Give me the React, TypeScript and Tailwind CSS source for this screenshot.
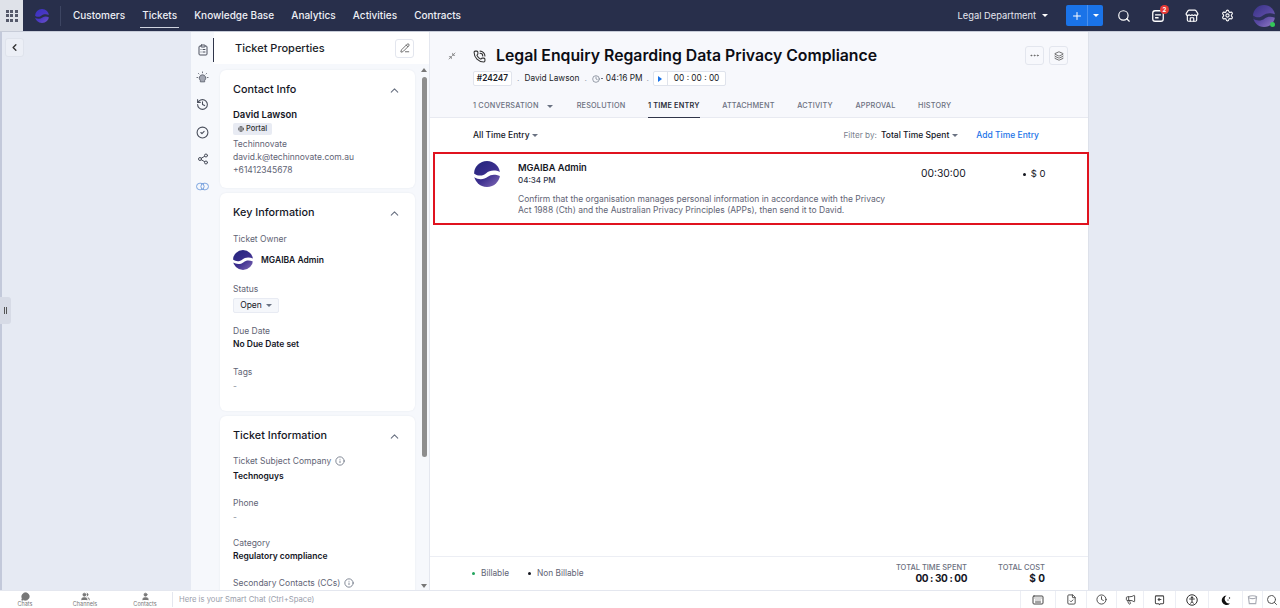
import {
  ChevronLeft, ChevronUp, CircleCheck, ClipboardList, Clock, History, Info,
  Keyboard, Layers, Megaphone, Minimize2, Ellipsis, PencilLine, PhoneCall,
  Plus, Search, Settings, Share2, Store, User, Users, FileCheck, Globe, MessageCircle,
} from "lucide-react";

const font = "font-['Inter','Liberation_Sans',sans-serif]";

function Logo({ size, id, band = "#fff", from = "#24247c", mid = "#3c2f8e", to = "#7d66b4" }: { size: number; id: string; band?: string; from?: string; mid?: string; to?: string }) {
  return (
    <svg width={size} height={size} viewBox="0 0 32 32" className="shrink-0">
      <defs>
        <linearGradient id={id} x1="0.1" y1="0" x2="0.9" y2="1">
          <stop offset="0" stopColor={from} />
          <stop offset="0.55" stopColor={mid} />
          <stop offset="1" stopColor={to} />
        </linearGradient>
      </defs>
      <circle cx="16" cy="16" r="16" fill={`url(#${id})`} />
      <path d="M-1 14.5 C5 19.5 11 18.5 15 15 C19 11.5 26 10.5 33 14 L33 19 C26 16 21 16.5 17 19.5 C12 23.5 5 23.5 -1 19.5 Z" fill={band} />
    </svg>
  );
}

function Caret({ className = "border-t-gray-500" }: { className?: string }) {
  return <span className={`h-0 w-0 border-x-[3px] border-t-[3px] border-x-transparent ${className}`} />;
}

function Card({ title, children, className = "" }: { title: string; children: React.ReactNode; className?: string }) {
  return (
    <div className={`rounded-md bg-white pr-[14px] pl-[13px] shadow-[0_0_2px_rgba(40,50,90,0.08)] ${className}`}>
      <div className="flex h-[40px] items-center justify-between">
        <h3 className="text-[10.8px] font-medium text-[#14161f]">{title}</h3>
        <ChevronUp size={13} className="text-gray-500" />
      </div>
      {children}
    </div>
  );
}

function Field({ label, value, mt, gap = "mt-[-1px]", info, muted }: { label: string; value: string; mt: string; gap?: string; info?: boolean; muted?: boolean }) {
  return (
    <div className={mt}>
      <p className="flex h-[14px] items-center gap-[4px] text-[8.5px] text-[#5f6475]">
        {label}
        {info && <Info size={10} className="text-gray-500" />}
      </p>
      <p className={`h-[14px] text-[8.5px] leading-[14px] ${muted ? "text-[#8a8f9c]" : "font-semibold text-[#14161f]"} ${gap}`}>{value}</p>
    </div>
  );
}

function BulbIcon() {
  return (
    <svg width="13" height="13" viewBox="0 0 24 24" fill="none" stroke="#5a5f6c" strokeWidth="1.6">
      <path d="M12 7a6 6 0 0 1 4 10.4V20h-8v-2.6A6 6 0 0 1 12 7Z" fill="#a3a7b3" />
      <path d="M12 1v3M4 4l2 2M20 4l-2 2M1 12h3M20 12h3" />
    </svg>
  );
}

function RingsIcon() {
  return (
    <svg width="13" height="13" viewBox="0 0 24 24" fill="none" stroke="#6f9cdc" strokeWidth="1.7">
      <rect x="1" y="6" width="14" height="12" rx="6" />
      <rect x="9" y="6" width="14" height="12" rx="6" />
    </svg>
  );
}

function NoticeIcon() {
  return (
    <svg width="14" height="14" viewBox="0 0 24 24" fill="none" stroke="#fff" strokeWidth="2.2">
      <rect x="3" y="3" width="18" height="18" rx="4" />
      <path d="M7 10h10M7 15h6" />
    </svg>
  );
}

function TrayAccessIcon() {
  return (
    <svg width="12" height="12" viewBox="0 0 24 24" fill="none" stroke="#333" strokeWidth="2">
      <circle cx="12" cy="12" r="10.5" />
      <circle cx="12" cy="7" r="1.5" fill="#333" />
      <path d="M6.5 10h11M12 10v5M12 15l-3 4M12 15l3 4" />
    </svg>
  );
}

function TrayMoonIcon() {
  return (
    <svg width="12" height="12" viewBox="0 0 24 24" fill="#111">
      <path d="M13 3a9.5 9.5 0 1 0 7 16A9 9 0 0 1 13 3Z" />
      <circle cx="19" cy="8" r="1.4" />
      <circle cx="16" cy="12" r="1.2" />
    </svg>
  );
}

function TrayCupIcon() {
  return (
    <svg width="11" height="11" viewBox="0 0 24 24" fill="none" stroke="#a8abb4" strokeWidth="2.4">
      <path d="M3 6c3-3 15-3 18 0l-2 15H5Z" />
      <path d="M4 8c4 2 12 2 16 0" />
    </svg>
  );
}

function TrayBoardIcon() {
  return (
    <svg width="11" height="12" viewBox="0 0 24 24" fill="none" stroke="#444" strokeWidth="2.2">
      <path d="M5 3h14a2 2 0 0 1 2 2v13a2 2 0 0 1-2 2h-5l-2 2-2-2H5a2 2 0 0 1-2-2V5a2 2 0 0 1 2-2Z" />
      <path d="M16 11H9M12 8l-3 3 3 3" />
    </svg>
  );
}

const navItems = ["Customers", "Tickets", "Knowledge Base", "Analytics", "Activities", "Contracts"];
const tabs = ["RESOLUTION", "1 TIME ENTRY", "ATTACHMENT", "ACTIVITY", "APPROVAL", "HISTORY"];

function TopBar() {
  return (
    <header className="flex h-[32px] shrink-0 items-center border-b border-[#c7ccd8] bg-[#282f4b]">
      <div className="grid h-full w-[23px] place-items-center bg-[#dfe2e9]">
        <div className="grid grid-cols-3 gap-[1.5px]">
          {[0, 1, 2, 3, 4, 5, 6, 7, 8].map((n) => (
            <span key={n} className="h-[3px] w-[3px] bg-[#55596a]" />
          ))}
        </div>
      </div>
      <div className="flex w-[37px] justify-center">
        <Logo size={14} id="logoNav" band="#282f4b" from="#3a32c0" mid="#4a38c4" to="#6a52c8" />
      </div>
      <div className="h-[20px] w-px bg-[#3d4562]" />
      <nav className="ml-[12px] flex h-full items-center gap-[17.2px]">
        {navItems.map((item) => (
          <a key={item} className="relative flex h-full items-center text-[10px] font-medium text-[#eef0f6]">
            {item}
            {item === "Tickets" && <span className="absolute -inset-x-[2px] bottom-[3px] h-px bg-[#cfd3df]" />}
          </a>
        ))}
      </nav>
      <div className="ml-auto flex items-center">
        <span className="text-[9.3px] text-[#e6e8f0]">Legal Department</span>
        <Caret className="ml-[6px] border-t-white" />
        <div className="ml-[18px] flex h-[21px] w-[37px] rounded-[2px] bg-[#1a73e8]">
          <span className="flex w-[22px] items-center justify-center border-r border-[#4a90ee]"><Plus size={12} className="text-white" /></span>
          <span className="flex flex-1 items-center justify-center"><Caret className="border-t-white" /></span>
        </div>
        <Search size={14} className="ml-[14px] text-white" />
        <div className="relative ml-[20px]">
          <NoticeIcon />
          <span className="absolute -top-[4px] -right-[4px] flex h-[9px] w-[9px] items-center justify-center rounded-full bg-[#e53935] text-[6px] font-bold text-white">2</span>
        </div>
        <Store size={14} className="ml-[20px] text-white" />
        <Settings size={13} className="ml-[22px] text-white" />
        <div className="relative mr-[5px] ml-[19px]">
          <Logo size={22} id="logoAvatar" band="#2c3158" from="#3a3488" mid="#5a4aa4" to="#8f78c4" />
          <span className="absolute right-0 bottom-0 h-[5px] w-[5px] rounded-full bg-[#34c759]" />
        </div>
      </div>
    </header>
  );
}

function LeftGutter() {
  return (
    <aside className="relative w-[191px] shrink-0 border-l-2 border-[#c3c9da] bg-[#e6eaf3]">
      <button className="mt-[6px] ml-[3px] flex h-[19px] w-[19px] items-center justify-center rounded-[3px] border border-[#dfe3ec] bg-[#eceff6]">
        <ChevronLeft size={11} strokeWidth={3} className="text-[#333]" />
      </button>
      <div className="absolute top-[265px] -left-[2px] flex h-[27px] w-[11px] items-center justify-center gap-[1px] rounded-r-[3px] bg-[#d7dbe6]">
        <span className="h-[7px] w-px bg-[#555]" />
        <span className="h-[7px] w-px bg-[#555]" />
      </div>
    </aside>
  );
}

function IconRail() {
  return (
    <div className="relative flex w-[23px] shrink-0 flex-col items-center gap-[14.5px] bg-[#f6f8fc] pt-[12px]">
      <ClipboardList size={12} className="text-[#4a4f5c]" />
      <BulbIcon />
      <History size={13} className="text-[#4a4f5c]" />
      <CircleCheck size={13} className="text-[#4a4f5c]" />
      <Share2 size={12} className="text-[#4a4f5c]" />
      <RingsIcon />
      <span className="absolute top-[6px] right-0 h-[24px] w-[1px] bg-[#30354a]" />
    </div>
  );
}

function PropertiesPanel() {
  return (
    <aside className="flex w-[216px] shrink-0 flex-col border-r border-[#e4e7ef] bg-[#f6f8fc]">
      <div className="flex h-[32px] shrink-0 items-center justify-between bg-white pr-[15px] pl-[21px]">
        <h2 className="text-[11px] font-medium text-[#1b1d28]">Ticket Properties</h2>
        <span className="flex h-[19px] w-[19px] items-center justify-center rounded-[3px] border border-[#e3e6ee]">
          <PencilLine size={10} className="text-[#555]" />
        </span>
      </div>
      <div className="flex min-h-0 flex-1">
        <div className="min-h-0 flex-1 overflow-hidden pt-[6px] pl-[6px]">
          <div className="flex flex-col gap-[5px] pr-[4px]">
            <Card title="Contact Info" className="h-[118px]">
              <p className="-mt-[2px] text-[9.5px] leading-[14px] font-semibold text-[#14161f]">David Lawson</p>
              <span className="mt-[1px] flex h-[12px] w-[39px] items-center justify-center gap-[2px] rounded-[2px] bg-[#e8ebf3] text-[7.5px] font-medium text-[#333]">
                <Globe size={6} /> Portal
              </span>
              <div className="mt-[3px] text-[8.5px] leading-[13px] text-[#5f6475]">
                <p>Techinnovate</p>
                <p>david.k@techinnovate.com.au</p>
                <p>+61412345678</p>
              </div>
            </Card>
            <Card title="Key Information" className="h-[218px]">
              <p className="-mt-[1px] h-[14px] text-[8.5px] leading-[14px] text-[#5f6475]">Ticket Owner</p>
              <div className="mt-[4px] flex items-center gap-[8px]">
                <Logo size={20} id="logoOwner" />
                <span className="text-[8.5px] font-semibold text-[#14161f]">MGAIBA Admin</span>
              </div>
              <p className="mt-[12px] h-[14px] text-[8.5px] leading-[14px] text-[#5f6475]">Status</p>
              <span className="mt-[2px] flex h-[15px] w-[46px] items-center justify-center gap-[4px] rounded-[2px] border border-[#e8ebf3] bg-[#f5f7fb] text-[8.5px] text-[#14161f]">
                Open <Caret />
              </span>
              <Field label="Due Date" value="No Due Date set" mt="mt-[11px]" />
              <Field label="Tags" value="-" mt="mt-[14px]" gap="mt-0" muted />
            </Card>
            <Card title="Ticket Information" className="h-[200px]">
              <Field label="Ticket Subject Company" value="Technoguys" mt="-mt-[2px]" gap="mt-[1px]" info />
              <Field label="Phone" value="-" mt="mt-[13px]" gap="mt-0" muted />
              <Field label="Category" value="Regulatory compliance" mt="mt-[12px]" />
              <Field label="Secondary Contacts (CCs)" value="" mt="mt-[13px]" info />
            </Card>
          </div>
        </div>
        <div className="flex w-[10px] shrink-0 flex-col items-center">
          <span className="mt-[4px] h-0 w-0 border-x-[3px] border-b-[4px] border-x-transparent border-b-[#777]" />
          <span className="mt-[5px] h-[380px] w-[5px] rounded-full bg-[#8e8e8e]" />
          <span className="mt-auto mb-[2px] h-0 w-0 border-x-[3px] border-t-[4px] border-x-transparent border-t-[#777]" />
        </div>
      </div>
    </aside>
  );
}

function TicketHeader() {
  return (
    <div className="h-[86px] shrink-0 border-b border-[#e8eaf1] bg-[#f7f8fc] pl-[43px]">
      <div className="flex h-[36px] items-end">
        <PhoneCall size={13} className="mb-[5px] text-[#333]" />
        <h1 className="ml-[10px] text-[15.8px] leading-[25px] font-semibold text-[#0c0d14]">Legal Enquiry Regarding Data Privacy Compliance</h1>
        <div className="mr-[20px] ml-auto flex gap-[5px] self-start pt-[14px]">
          <span className="flex h-[19px] w-[19px] items-center justify-center rounded-[3px] border border-[#e3e6ee]"><Ellipsis size={11} className="text-[#666]" /></span>
          <span className="flex h-[19px] w-[19px] items-center justify-center rounded-[3px] border border-[#e3e6ee]"><Layers size={10} className="text-[#555]" /></span>
        </div>
      </div>
      <div className="mt-[3px] flex h-[15px] items-center text-[8.3px] text-[#1b1d28]">
        <span className="flex h-[15px] w-[39px] items-center justify-center rounded-[2px] border border-[#e1e4ec] bg-white font-semibold">#24247</span>
        <span className="mx-[5px] text-gray-400">.</span>
        <span>David Lawson</span>
        <span className="mx-[5px] text-gray-400">.</span>
        <Clock size={8} className="text-gray-500" />
        <span className="mr-[3px] ml-[1px] h-px w-[2px] bg-gray-500" />
        <span>04:16 PM</span>
        <span className="mx-[4px] text-gray-400">.</span>
        <span className="flex h-[15px] items-center rounded-[2px] border border-[#dfe3ec] bg-white">
          <span className="flex h-full w-[14px] items-center justify-center border-r border-[#dfe3ec]">
            <span className="h-0 w-0 border-y-[3px] border-l-[4px] border-y-transparent border-l-[#1a73e8]" />
          </span>
          <span className="px-[6px]">00 : 00 : 00</span>
        </span>
      </div>
      <div className="mt-[9px] flex h-[22px] items-center gap-[22.5px] text-[7.3px] font-medium tracking-[0.2px] text-[#6b7080]">
        <span className="mr-[1.5px] flex items-center gap-[8px]">1 CONVERSATION <Caret /></span>
        {tabs.map((tab) => (
          <span key={tab} className={tab === "1 TIME ENTRY" ? "relative font-semibold text-[#2a2d3a]" : ""}>
            {tab}
            {tab === "1 TIME ENTRY" && <span className="absolute inset-x-0 top-[16px] h-px bg-[#30354a]" />}
          </span>
        ))}
      </div>
    </div>
  );
}

function TimeEntries() {
  return (
    <main className="flex min-w-0 flex-1 flex-col bg-white">
      <div className="relative">
        <Minimize2 size={8} className="absolute top-[20px] left-[18px] text-[#666]" />
        <TicketHeader />
      </div>
      <div className="flex h-[34px] shrink-0 items-center pr-[49px] pl-[43px] text-[8.5px]">
        <span className="font-medium text-[#14161f]">All Time Entry</span>
        <Caret className="ml-[2px] border-t-gray-500" />
        <span className="ml-auto text-[8.2px] text-[#7a7f8e]">Filter by:</span>
        <span className="ml-[4px] font-medium text-[#14161f]">Total Time Spent</span>
        <Caret className="ml-[3px] border-t-gray-500" />
        <span className="ml-[18px] font-medium text-[#1a73e8]">Add Time Entry</span>
      </div>
      <div className="relative -mr-[1px] ml-[3px] flex h-[73px] shrink-0 border-2 border-[#e0131f] pt-[7px] pl-[39px]">
        <Logo size={26} id="logoEntry" />
        <div className="-mt-[1px] ml-[18px] w-[375px] shrink-0">
          <p className="text-[9.3px] leading-[15px] font-semibold text-[#14161f]">MGAIBA Admin</p>
          <p className="text-[8px] leading-[11px] font-medium text-[#30354a]">04:34 PM</p>
          <p className="mt-[8px] text-[8.5px] leading-[11px] text-[#5f6475]">
            Confirm that the organisation manages personal information in accordance with the Privacy Act 1988 (Cth) and the Australian Privacy Principles (APPs), then send it to David.
          </p>
        </div>
        <span className="ml-[28px] pt-[5px] text-[10.3px] text-[#14161f]">00:30:00</span>
        <span className="ml-[57px] flex items-center gap-[5px] self-start pt-[6px] text-[9.5px] text-[#14161f]">
          <span className="h-[3px] w-[3px] rounded-full bg-[#14161f]" />$ 0
        </span>
      </div>
      <div className="mt-auto flex h-[34px] shrink-0 items-center border-t border-[#eceef4] pr-[43px] pl-[42px]">
        <span className="h-[3px] w-[3px] rounded-full bg-[#22a45d]" />
        <span className="ml-[6px] text-[8.3px] text-[#5f6475]">Billable</span>
        <span className="ml-[19px] h-[3px] w-[3px] rounded-full bg-[#14161f]" />
        <span className="ml-[6px] text-[8.3px] text-[#5f6475]">Non Billable</span>
        <div className="ml-auto text-right">
          <p className="text-[7.5px] leading-[9px] font-medium text-[#6b7080]">TOTAL TIME SPENT</p>
          <p className="text-[10px] leading-[13px] font-bold tracking-[-0.4px] text-[#14161f]">00 : 30 : 00</p>
        </div>
        <div className="ml-[31px] text-right">
          <p className="text-[7.5px] leading-[9px] font-medium text-[#6b7080]">TOTAL COST</p>
          <p className="text-[10px] leading-[13px] font-bold text-[#14161f]">$ 0</p>
        </div>
      </div>
    </main>
  );
}

function BottomBar() {
  const tabsLeft = [
    { label: "Chats", Icon: MessageCircle },
    { label: "Channels", Icon: Users },
    { label: "Contacts", Icon: User },
  ];
  return (
    <footer className="flex h-[18px] shrink-0 items-center border-t border-[#e4e7ef] bg-white">
      <div className="flex w-[173px] shrink-0 border-r border-[#e4e7ef]">
        {tabsLeft.map(({ label, Icon }, i) => (
          <div key={label} className={`flex w-[40px] flex-col items-center ${i === 0 ? "ml-[5px]" : "ml-[20px]"}`}>
            <Icon size={9} className="fill-[#777] text-[#777]" />
            <span className="text-[5.5px] leading-[6px] text-[#777]">{label}</span>
          </div>
        ))}
      </div>
      <span className="ml-[6px] text-[7.7px] text-[#9a9eab]">Here is your Smart Chat (Ctrl+Space)</span>
      <div className="ml-auto flex h-full items-center">
        <span className="flex h-full w-[35px] items-center justify-center border-l border-[#eceef4]"><Keyboard size={12} className="text-[#444]" /></span>
        <span className="flex h-full w-[31px] items-center justify-center border-l border-[#eceef4]"><FileCheck size={11} className="text-[#444]" /></span>
        <span className="flex h-full w-[30px] items-center justify-center border-l border-[#eceef4]"><Clock size={11} className="text-[#444]" /></span>
        <span className="flex h-full w-[27px] items-center justify-center border-l border-[#eceef4]"><Megaphone size={11} className="text-[#444]" /></span>
        <span className="flex h-full w-[32px] items-center justify-center border-l border-[#eceef4]"><TrayBoardIcon /></span>
        <span className="flex h-full w-[33px] items-center justify-center border-l border-[#eceef4]"><TrayAccessIcon /></span>
        <span className="flex h-full w-[34px] items-center justify-center border-l border-[#eceef4]"><TrayMoonIcon /></span>
        <span className="flex h-full w-[20px] items-center justify-center border-l border-[#eceef4]"><TrayCupIcon /></span>
        <span className="flex h-full w-[18px] items-center justify-center border-l border-[#eceef4]"><Search size={12} className="text-[#555]" /></span>
      </div>
    </footer>
  );
}

export default function App() {
  return (
    <div className={`flex h-[608px] w-[1280px] flex-col overflow-hidden bg-[#e6eaf3] ${font}`}>
      <TopBar />
      <div className="flex min-h-0 flex-1">
        <LeftGutter />
        <IconRail />
        <PropertiesPanel />
        <div className="flex w-[658px] shrink-0 flex-col">
          <TimeEntries />
        </div>
        <div className="flex-1 border-l border-[#dde1ea] bg-[#e6eaf3]" />
      </div>
      <BottomBar />
    </div>
  );
}
